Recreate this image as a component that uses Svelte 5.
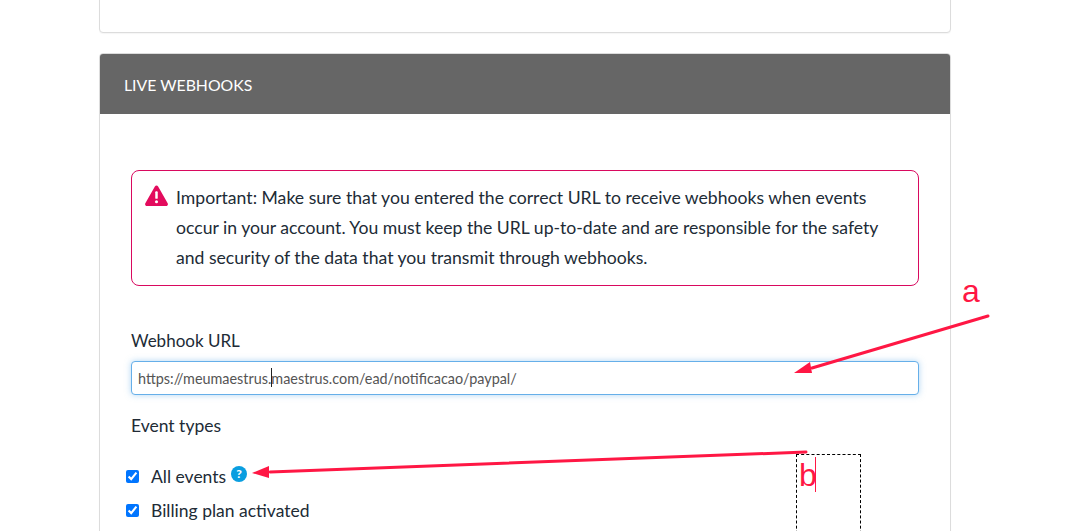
<script>
  const events = [
    { label: "All events", help: true },
    { label: "Billing plan activated", help: false },
  ];
  let url = "https://meumaestrus.maestrus.com/ead/notificacao/paypal/";
</script>

<main>
  <div class="card top-card"></div>

  <section class="card">
    <header>LIVE WEBHOOKS</header>
    <div class="body">
      <div class="alert">
        <svg class="warn" viewBox="0 0 24 22" width="23" height="21">
          <path d="M12 .6c.7 0 1.3.4 1.7 1l10 17.6c.7 1.3-.2 2.8-1.700 2.800H2c-1.500 0-2.400-1.500-1.700-2.800l10-17.600c.4-.6 1-1 1.700-1z" fill="#e30b5d" />
          <rect x="10.700" y="6.500" width="2.600" height="8" rx="1" fill="#fff" />
          <circle cx="12" cy="17.500" r="1.600" fill="#fff" />
        </svg>
        <p>
          Important: Make sure that you entered the correct URL to receive webhooks when events
          occur in your account. You must keep the URL up-to-date and are responsible for the safety
          and security of the data that you transmit through webhooks.
        </p>
      </div>

      <label class="field-label" for="url">Webhook URL</label>
      <div class="input-wrap">
        <input id="url" type="text" value={url} readonly />
        <span class="caret"></span>
      </div>

      <div class="field-label types">Event types</div>
      <ul>
        {#each events as ev}
          <li>
            <input type="checkbox" checked />
            <span>{ev.label}</span>
            {#if ev.help}
              <span class="help">?</span>
            {/if}
          </li>
        {/each}
      </ul>
    </div>
  </section>

  <svg class="arrows" width="1072" height="531" viewBox="0 0 1072 531">
    <line x1="988" y1="316" x2="812" y2="368" stroke="#ff1744" stroke-width="3" stroke-linecap="round" />
    <polygon points="794,373 810,362 812,373" fill="#ff1744" />
    <line x1="806" y1="452" x2="270" y2="472" stroke="#ff1744" stroke-width="3" stroke-linecap="round" />
    <polygon points="252,473 269,466 269,478" fill="#ff1744" />
  </svg>

  <div class="textbox"><span>b</span><i></i></div>
  <span class="mark">a</span>
</main>

<style>
  :global(body) {
    margin: 0;
    background: #fff;
    overflow: hidden;
  }

  main {
    position: relative;
    width: 1072px;
    height: 531px;
    overflow: hidden;
    padding: 0 121px 0 99px;
    box-sizing: border-box;
    font-family: "Lato", "Open Sans", sans-serif;
    color: #212b36;
  }

  .card {
    background: #fff;
    border: 1px solid #dcdcdc;
    border-radius: 4px;
    box-shadow: 0 1px 1px rgba(0, 0, 0, 0.04);
  }

  .top-card {
    height: 40px;
    margin-top: -9px;
    margin-bottom: 20px;
  }

  header {
    background: #666;
    color: #fff;
    height: 60px;
    line-height: 62px;
    padding-left: 24px;
    font-size: 15.800px;
    border-radius: 3px 3px 0 0;
  }

  .body {
    padding: 56px 31px 40px 31px;
  }

  .alert {
    display: flex;
    align-items: flex-start;
    gap: 8px;
    border: 1px solid #d9095f;
    border-radius: 8px;
    padding: 12px 20px 12px 13px;
    height: 116px;
    box-sizing: border-box;
    margin-bottom: 44px;
  }

  .warn {
    flex: none;
    margin-top: 2px;
  }

  .alert p {
    margin: 0;
    font-size: 17.620px;
    line-height: 30px;
  }

  .field-label {
    display: block;
    font-size: 17px;
    line-height: 22px;
    margin-bottom: 9px;
  }

  .types {
    margin-top: 20px;
    margin-bottom: 27px;
    font-size: 17.500px;
  }

  .input-wrap {
    position: relative;
  }

  input[type="text"] {
    display: block;
    width: 100%;
    height: 34px;
    box-sizing: border-box;
    padding: 0 6px;
    border: 1px solid #66afe9;
    border-radius: 4px;
    outline: none;
    box-shadow: 0 0 6px rgba(102, 175, 233, 0.5);
    font-family: inherit;
    font-size: 14.400px;
    color: #555;
  }

  .caret {
    position: absolute;
    left: 140px;
    top: 7px;
    width: 1px;
    height: 19px;
    background: #222;
  }

  ul {
    list-style: none;
    margin: 0;
    padding: 0;
  }

  li {
    display: flex;
    align-items: center;
    height: 24px;
    margin-bottom: 10px;
    margin-left: -5px;
    font-size: 17.500px;
  }

  li input {
    width: 13px;
    height: 13px;
    margin: 0 12px 0 0;
    accent-color: #0075ff;
  }

  .help {
    display: inline-block;
    width: 16px;
    height: 16px;
    margin: -4px 0 0 5px;
    border-radius: 50%;
    background: #0a9ee0;
    color: #fff;
    font-size: 12px;
    font-weight: 900;
    line-height: 16px;
    text-align: center;
  }

  .arrows {
    position: absolute;
    left: 0;
    top: 0;
    pointer-events: none;
  }

  .textbox {
    position: absolute;
    left: 796px;
    top: 454px;
    width: 65px;
    height: 90px;
    box-sizing: border-box;
    border: 1px dashed #000;
    padding: 2px 0 0 2px;
    display: flex;
    align-items: flex-start;
    font-family: "Liberation Sans", sans-serif;
    font-size: 32px;
    line-height: 37px;
    color: #ff1744;
  }

  .textbox i {
    width: 1px;
    height: 35px;
    margin-left: -2px;
    background: #ff1744;
  }

  .mark {
    position: absolute;
    left: 962px;
    top: 273px;
    font-family: "Liberation Sans", sans-serif;
    font-size: 32px;
    line-height: 37px;
    color: #ff1744;
  }
</style>
